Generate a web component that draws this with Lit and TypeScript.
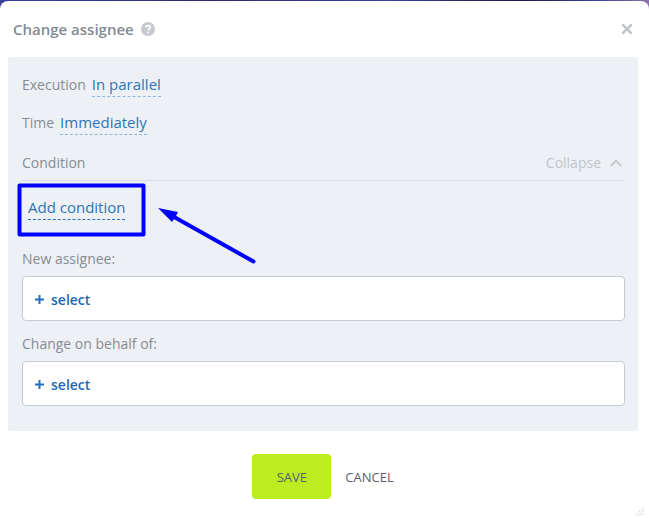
import { LitElement, html, css, svg } from "lit";
import { customElement, property, state } from "lit/decorators.js";

@customElement("select-field")
class SelectField extends LitElement {
  @property() label = "";

  static styles = css`
    :host {
      display: block;
    }
    .label {
      display: block;
      font-size: 14px;
      line-height: 20px;
      margin-bottom: 7px;
      color: #858c96;
    }
    .box {
      box-sizing: border-box;
      height: 45px;
      display: flex;
      align-items: center;
      padding: 2px 12px 0;
      border: 1px solid #c3cbd3;
      border-radius: 4px;
      background: #fff;
    }
    .pick {
      display: flex;
      align-items: center;
      gap: 7px;
      border: 0;
      padding: 0;
      background: none;
      font: 600 14px/20px "Open Sans", "Noto Sans", sans-serif;
      color: #1f68b3;
      cursor: pointer;
    }
  `;

  render() {
    return html`
      <span class="label" id="label">${this.label}</span>
      <div class="box">
        <button class="pick" type="button" aria-describedby="label">
          <svg width="9" height="9" viewBox="0 0 9 9" aria-hidden="true">
            <path d="M4.5 0V9M0 4.5H9" stroke="#1f6fc0" stroke-width="2" />
          </svg>
          select
        </button>
      </div>
    `;
  }
}

@customElement("app-root")
class AppRoot extends LitElement {
  @state() private open = true;

  static styles = css`
    :host {
      display: block;
      min-height: 100vh;
      box-sizing: border-box;
      padding-top: 1px;
      background: linear-gradient(90deg, #35409a, #2e2a78 33%, #3a3f9c 60%, #1c1850 80%, #3a429c 92%, #8a70b0);
      font-family: "Open Sans", "Noto Sans", sans-serif;
      font-size: 14px;
      line-height: 20px;
      color: #858c96;
    }
    .dialog {
      position: relative;
      box-sizing: border-box;
      min-height: calc(100vh - 1px);
      padding: 0 11px 19px 8px;
      border-radius: 8px 8px 0 0;
      background: #fff;
    }
    button {
      border: 0;
      padding: 0;
      background: none;
      font: inherit;
      color: inherit;
      cursor: pointer;
    }
    svg {
      display: block;
    }
    .head {
      display: flex;
      align-items: center;
      height: 56px;
      padding: 0 5px;
    }
    h1 {
      margin: 0 7px 0 0;
      font-size: 15px;
      line-height: 20px;
      font-weight: 600;
      color: #838a93;
    }
    .close {
      margin-left: auto;
    }
    .panel {
      padding: 9px 13px 25px 14px;
      border-radius: 2px;
      background: #edf1f5;
    }
    .row {
      display: flex;
      align-items: center;
      gap: 6px;
      height: 38px;
    }
    .link {
      font-size: 15px;
      line-height: 20px;
      color: #2f74b8;
      border-bottom: 1px dashed #8db6dd;
      padding-bottom: 2px;
    }
    .section {
      justify-content: space-between;
      box-sizing: border-box;
      height: 39px;
      padding-top: 3px;
      border-bottom: 1px solid #d9dde2;
    }
    .collapse {
      display: flex;
      align-items: center;
      gap: 9px;
      padding-right: 3px;
      color: #c0c5ca;
    }
    .condition {
      position: relative;
      height: 68px;
      padding: 16px 6px 0;
      box-sizing: border-box;
    }
    .add {
      border-bottom-color: #2f74b8;
    }
    .callout {
      position: absolute;
      left: -4px;
      top: 2px;
      pointer-events: none;
    }
    .second {
      margin-top: 13px;
    }
    .foot {
      display: flex;
      justify-content: center;
      align-items: center;
      gap: 14px;
      padding-top: 23px;
      color: #56606c;
      font-size: 13px;
      font-weight: 500;
    }
    .save {
      width: 79px;
      height: 45px;
      border-radius: 4px;
      background: #bbed21;
    }
    .grip {
      position: absolute;
      right: 4px;
      bottom: 2px;
    }
  `;

  private arrow() {
    return svg`
      <rect x="1.5" y="2.5" width="124" height="49" fill="none" stroke="#0000ff" stroke-width="4" stroke-linejoin="round" />
      <path d="M149 30L235.500 78.500" stroke="#0000ff" stroke-width="4" stroke-linecap="round" />
      <path d="M140 25L160 29L158 33L154 39Z" fill="#0000ff" />
    `;
  }

  render() {
    return html`
      <main class="dialog">
        <header class="head">
          <h1>Change assignee</h1>
          <button type="button" aria-label="Help">
            <svg width="14" height="14" viewBox="0 0 14 14">
              <circle cx="7" cy="7" r="7" fill="#c6cacf" />
              <path d="M4.9 5.5C4.9 2.9 9.2 2.9 9.2 5.4C9.2 6.9 7.1 6.8 7.1 8.5" fill="none" stroke="#fff" stroke-width="1.6" />
              <circle cx="7.1" cy="10.5" r="1" fill="#fff" />
            </svg>
          </button>
          <button class="close" type="button" aria-label="Close">
            <svg width="12" height="12" viewBox="0 0 12 12">
              <path d="M1.3 1.3L10.7 10.7M10.7 1.3L1.3 10.7" stroke="#bdc3c9" stroke-width="2.4" />
            </svg>
          </button>
        </header>
        <section class="panel">
          <div class="row">
            <span>Execution</span>
            <button class="link" type="button">In parallel</button>
          </div>
          <div class="row">
            <span>Time</span>
            <button class="link" type="button">Immediately</button>
          </div>
          <div class="row section">
            <span>Condition</span>
            <button class="collapse" type="button" aria-expanded=${this.open} @click=${() => (this.open = !this.open)}>
              Collapse
              <svg width="12" height="8" viewBox="0 0 12 8" aria-hidden="true">
                <path d="M1 7L6 1.7L11 7" fill="none" stroke="#b9bfc5" stroke-width="1.5" />
              </svg>
            </button>
          </div>
          <div class="condition">
            <button class="link add" type="button">Add condition</button>
            <svg class="callout" width="240" height="84" viewBox="0 0 240 84" overflow="visible" aria-hidden="true">
              ${this.arrow()}
            </svg>
          </div>
          <select-field label="New assignee:"></select-field>
          <select-field class="second" label="Change on behalf of:"></select-field>
        </section>
        <footer class="foot">
          <button class="save" type="button">SAVE</button>
          <button type="button">CANCEL</button>
        </footer>
        <svg class="grip" width="10" height="10" viewBox="0 0 10 10" aria-hidden="true">
          <path d="M0.5 9.5L9.5 0.5M3.5 9.5L9.5 3.5M6.5 9.5L9.5 6.5" stroke="#c9c9c9" stroke-dasharray="1.4 1" />
        </svg>
      </main>
    `;
  }
}
